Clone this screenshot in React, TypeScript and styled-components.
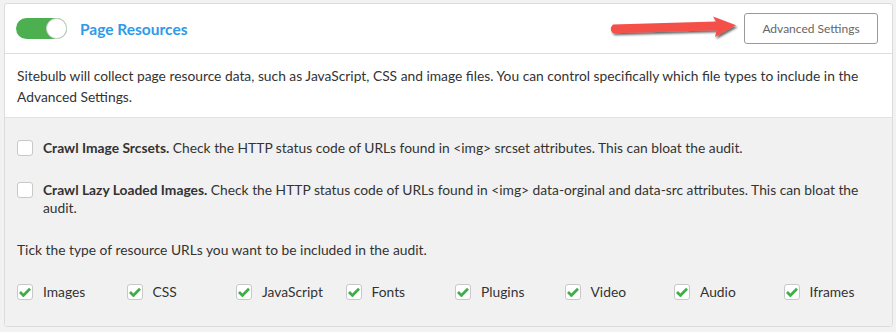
import React from 'react'
import styled, { createGlobalStyle } from 'styled-components'

const GlobalStyle = createGlobalStyle`
  html, body {
    margin: 0;
    padding: 0;
    background: #f2f2f2;
    font-family: Lato, "Open Sans", sans-serif;
    color: #333;
  }
`

const resourceTypes = ['Images', 'CSS', 'JavaScript', 'Fonts', 'Plugins', 'Video', 'Audio', 'Iframes']

const options = [
  {
    title: 'Crawl Image Srcsets.',
    text: 'Check the HTTP status code of URLs found in <img> srcset attributes. This can bloat the audit.',
  },
  {
    title: 'Crawl Lazy Loaded Images.',
    text: 'Check the HTTP status code of URLs found in <img> data-orginal and data-src attributes. This can bloat the audit.',
  },
]

function Arrow() {
  return (
    <ArrowSvg width="140" height="36" viewBox="0 0 140 36">
      <defs>
        <filter id="shadow" x="-10%" y="-50%" width="120%" height="200%">
          <feDropShadow dx="1.5" dy="2" stdDeviation="1.3" floodColor="#000" floodOpacity="0.6" />
        </filter>
      </defs>
      <path
        d="M9 12.5 L112 9.6 L109 4.5 L132 13.2 L111 25 L112.5 18.2 L9 21.2 Q4.5 17 9 12.5 Z"
        fill="#f5504a"
        filter="url(#shadow)"
      />
    </ArrowSvg>
  )
}

function Tick() {
  return (
    <svg width="12" height="10" viewBox="0 0 12 10">
      <path d="M1 5 L4.4 8.4 L11 1.8" fill="none" stroke="#3fae49" strokeWidth="2.8" />
    </svg>
  )
}

export default function App() {
  return (
    <>
      <GlobalStyle />
      <Page>
        <Card>
          <Header>
            <Toggle>
              <Knob />
            </Toggle>
            <Title>Page Resources</Title>
            <Spacer />
            <Arrow />
            <Button>Advanced Settings</Button>
          </Header>
          <Description>
            Sitebulb will collect page resource data, such as JavaScript, CSS and image files. You can control
            specifically which file types to include in the Advanced Settings.
          </Description>
          <Options>
            {options.map(option => (
              <OptionRow key={option.title}>
                <Box />
                <OptionText>
                  <strong>{option.title}</strong> {option.text}
                </OptionText>
              </OptionRow>
            ))}
            <Hint>Tick the type of resource URLs you want to be included in the audit.</Hint>
            <Types>
              {resourceTypes.map(type => (
                <TypeItem key={type}>
                  <Box>
                    <Tick />
                  </Box>
                  {type}
                </TypeItem>
              ))}
            </Types>
          </Options>
        </Card>
      </Page>
    </>
  )
}

const Page = styled.div`
  padding: 3px 3px 3px 4px;
`

const Card = styled.div`
  border: 1px solid #dcdcdc;
  border-radius: 3px;
  overflow: hidden;
  background: #fff;
`

const Header = styled.div`
  display: flex;
  align-items: center;
  height: 49px;
  padding: 0 14px 0 11px;
  border-bottom: 1px solid #dedede;
`

const Toggle = styled.div`
  position: relative;
  width: 51px;
  height: 21px;
  border-radius: 11px;
  background: #4caf50;
`

const Knob = styled.div`
  position: absolute;
  right: 0;
  top: 0;
  width: 19px;
  height: 19px;
  border-radius: 50%;
  background: #fff;
  border: 1px solid #d0d0d0;
`

const Title = styled.h2`
  margin: 0 0 0 13px;
  font-size: 15.5px;
  font-weight: 700;
  color: #2f9ae8;
`

const Spacer = styled.div`
  flex: 1;
`

const ArrowSvg = styled.svg`
  display: block;
  align-self: flex-start;
  margin-top: 8px;
`

const Button = styled.button`
  width: 134px;
  height: 31px;
  background: #fff;
  border: 1px solid #9a9a9a;
  border-radius: 3px;
  font-family: Lato, "Open Sans", sans-serif;
  font-size: 12px;
  color: #666;
  padding: 0;
`

const Description = styled.p`
  margin: 0;
  padding: 11px 12px 10px;
  font-size: 13.8px;
  line-height: 21px;
  border-bottom: 1px solid #e2e2e2;
`

const Options = styled.div`
  background: #f1f1f1;
  padding: 21px 12px 25px;
  font-size: 13.8px;
  line-height: 18px;
`

const OptionRow = styled.div`
  display: flex;
  align-items: flex-start;
  gap: 10px;
  margin-bottom: 24px;
`

const Box = styled.span`
  flex: none;
  display: flex;
  align-items: center;
  justify-content: center;
  width: 14px;
  height: 14px;
  margin-top: 1px;
  background: #fff;
  border: 1px solid #c8c8c8;
  border-radius: 3px;
`

const OptionText = styled.div`
  padding-right: 4px;
  strong {
    font-weight: 700;
  }
`

const Hint = styled.div`
  margin: 3px 0 24px;
`

const Types = styled.div`
  display: grid;
  grid-template-columns: repeat(8, 109.5px);
`

const TypeItem = styled.label`
  display: flex;
  align-items: flex-start;
  gap: 10px;
`
